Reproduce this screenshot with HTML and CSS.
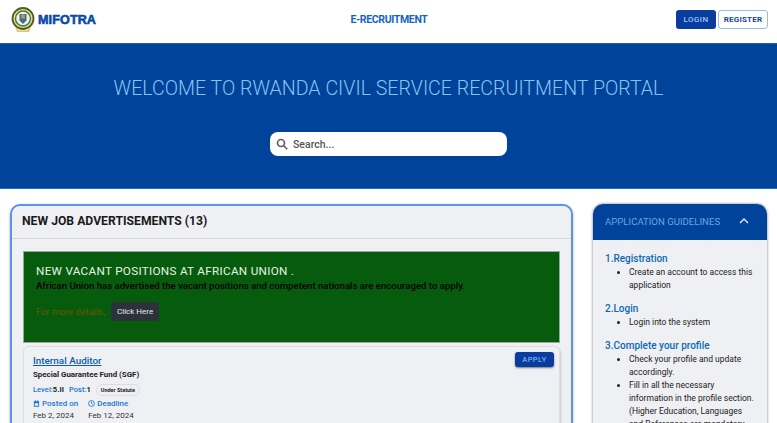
FILE: index.html
```html
<!DOCTYPE html>
<html lang="en">
<head>
<meta charset="UTF-8">
<meta name="viewport" content="width=device-width, initial-scale=1.0"/>
<title>MIFOTRA E-Recruitment</title>
<link rel="stylesheet" href="styles.css">
</head>
<body>
<nav class="navbar">
  <div class="brand">
    <svg class="emblem" width="24" height="26" viewBox="0 0 24 26">
      <circle cx="12" cy="11.5" r="10.5" fill="#e6dc9a" stroke="#4f5f22" stroke-width="1.8"/>
      <circle cx="12" cy="11.5" r="7.5" fill="#f6f3df" stroke="#3c7a3f" stroke-width="1.4"/>
      <path d="M8.5 7h7v6.5L12 17l-3.500-3.500z" fill="#3b6aa8"/>
      <path d="M10.200 7.500h3.600v4h-3.600z" fill="#b9a336"/>
      <path d="M4 20l4 3.500h8l4-3.500-2 5H6z" fill="#d9c95e"/>
    </svg>
    <span class="brand-name">MIFOTRA</span>
  </div>
  <div class="nav-title">E-RECRUITMENT</div>
  <div class="nav-buttons">
    <a class="btn btn-login">LOGIN</a>
    <a class="btn btn-register">REGISTER</a>
  </div>
</nav>

<section class="hero">
  <h1>WELCOME TO RWANDA CIVIL SERVICE RECRUITMENT PORTAL</h1>
  <div class="search">
    <svg width="12" height="12" viewBox="0 0 24 24" fill="none" stroke="#5f6368" stroke-width="3.4">
      <circle cx="10" cy="10" r="7"/>
      <path d="M15 15l7.500 7.500"/>
    </svg>
    <span>Search...</span>
  </div>
</section>

<main class="content">
  <section class="jobs">
    <h2 class="jobs-title">NEW JOB ADVERTISEMENTS (13)</h2>
    <div class="jobs-body">
      <div class="notice">
        <h3>NEW VACANT POSITIONS AT AFRICAN UNION .</h3>
        <p class="notice-text">African Union has advertised the vacant positions and competent nationals are encouraged to apply.</p>
        <p class="notice-more">For more details, <a class="click-here">Click Here</a></p>
      </div>
      <div class="job">
        <a class="apply">APPLY</a>
        <a class="job-name">Internal Auditor</a>
        <div class="employer">Special Guarantee Fund (SGF)</div>
        <div class="job-meta">
          <span class="key">Level:</span><b>5.II</b>
          <span class="key post">Post:</span><b>1</b>
          <span class="chip">Under Statute</span>
        </div>
        <div class="dates">
          <div>
            <div class="key date-label">
              <svg width="7" height="7" viewBox="0 0 24 24" fill="#1976d2"><path d="M3 4h3V1h3v3h6V1h3v3h3v19H3zm3 7v9h12v-9z"/></svg>
              Posted on
            </div>
            <div class="date">Feb 2, 2024</div>
          </div>
          <div>
            <div class="key date-label">
              <svg width="7" height="7" viewBox="0 0 24 24" fill="none" stroke="#1976d2" stroke-width="3"><circle cx="12" cy="12" r="10"/><path d="M12 6v6l4 2"/></svg>
              Deadline
            </div>
            <div class="date">Feb 12, 2024</div>
          </div>
        </div>
      </div>
    </div>
  </section>

  <aside class="guide">
    <div class="guide-head">
      <span>APPLICATION GUIDELINES</span>
      <svg width="10" height="6" viewBox="0 0 10 6" fill="none" stroke="#e3edf7" stroke-width="1.4"><path d="M1 5l4-4 4 4"/></svg>
    </div>
    <div class="guide-body">
      <h4>1.Registration</h4>
      <ul>
        <li>Create an account to access this application</li>
      </ul>
      <h4>2.Login</h4>
      <ul>
        <li>Login into the system</li>
      </ul>
      <h4>3.Complete your profile</h4>
      <ul>
        <li>Check your profile and update accordingly.</li>
        <li>Fill in all the necessary information in the profile section. (Higher Education, Languages and References are mandatory</li>
      </ul>
    </div>
  </aside>
</main>
</body>
</html>
```

FILE: styles.css
```css
html, body {
  height: 423px;
  overflow: hidden;
}
body {
  margin: 0;
  font-family: Roboto, "Liberation Sans", sans-serif;
  background: #fff;
  color: #212121;
  font-size: 10px;
}

/* top bar */
.navbar {
  height: 43px;
  display: grid;
  grid-template-columns: 1fr auto 1fr;
  align-items: center;
  padding: 0 9px 4px 10px;
  box-sizing: border-box;
}
.brand {
  display: flex;
  align-items: center;
  gap: 3px;
}
.emblem {
  margin-left: 1px;
}
.brand-name {
  font-family: "Liberation Sans", sans-serif;
  font-weight: bold;
  font-size: 12.6px;
  letter-spacing: 0.1px;
  color: #0a4aa6;
  -webkit-text-stroke: 0.6px #0a4aa6;
}
.nav-title {
  font-size: 10.5px;
  font-weight: bold;
  letter-spacing: -0.35px;
  color: #1565c0;
}
.nav-buttons {
  display: flex;
  justify-content: flex-end;
  gap: 2px;
}
.btn {
  height: 19px;
  display: flex;
  align-items: center;
  justify-content: center;
  border-radius: 3px;
  font-size: 8px;
  font-weight: 500;
  letter-spacing: 0.4px;
  box-sizing: border-box;
}
.btn-login {
  width: 40px;
  background: #0a3ca0;
  color: #90caf9;
}
.btn-register {
  width: 50px;
  background: #fff;
  border: 1px solid #90bfe8;
  color: #0d47a1;
  font-weight: bold;
  letter-spacing: 0.2px;
}

/* blue banner */
.hero {
  height: 146px;
  background: #01429a;
  border-top: 1px solid #1c62b0;
  border-bottom: 1px solid #1c72c0;
  box-sizing: border-box;
  display: flex;
  flex-direction: column;
  align-items: center;
  padding-top: 32px;
}
.hero h1 {
  margin: 0;
  font-size: 19.6px;
  line-height: 26px;
  font-weight: 300;
  color: #86c5f0;
}
.search {
  width: 237px;
  height: 24px;
  margin-top: 30px;
  background: #fff;
  border-radius: 8px;
  display: flex;
  align-items: center;
  gap: 5px;
  padding-left: 6px;
  box-sizing: border-box;
  font-size: 10.5px;
  font-weight: 500;
  color: #555;
}

/* main columns */
.content {
  display: flex;
  align-items: flex-start;
  gap: 20px;
  padding: 15px 10px 0;
}
.jobs {
  width: 563px;
  flex: none;
  background: #eff0f4;
  border: 2px solid #5a94ea;
  border-radius: 10px;
  box-sizing: border-box;
  box-shadow: 0 1px 3px rgba(0,0,0,0.3);
}
.jobs-title {
  margin: 0;
  height: 32px;
  padding-left: 10px;
  line-height: 31px;
  font-size: 12.2px;
  font-weight: 700;
  color: #1a1a1a;
  border-bottom: 1px solid #d8d9dd;
}
.jobs-body {
  padding: 12px 11px 0;
}
.notice {
  height: 92px;
  background: #065c0c;
  border: 1px solid #9aa79a;
  box-sizing: border-box;
  padding: 12px 12px 0;
}
.notice h3 {
  margin: 0;
  font-size: 11.7px;
  line-height: 15px;
  font-weight: 400;
  letter-spacing: 0.3px;
  color: #e6f2e6;
}
.notice-text {
  margin: 0;
  font-size: 9.6px;
  line-height: 14px;
  font-weight: 500;
  color: #000;
}
.notice-more {
  margin: 9px 0 0;
  display: flex;
  align-items: center;
  gap: 6px;
  font-size: 9.3px;
  color: #6d5400;
}
.click-here {
  height: 19px;
  padding: 0 6px;
  display: flex;
  align-items: center;
  background: #2c323a;
  border-radius: 3px;
  font-size: 8px;
  color: #e8e8e8;
}
.job {
  position: relative;
  margin-top: 3px;
  height: 120px;
  background: #eff0f4;
  border: 1px solid #dcdde1;
  border-radius: 6px;
  padding: 7px 9px 0;
  box-sizing: border-box;
  box-shadow: 1px 1px 2px rgba(0,0,0,0.15);
}
.apply {
  position: absolute;
  top: 5px;
  right: 5px;
  width: 39px;
  height: 15px;
  display: flex;
  align-items: center;
  justify-content: center;
  background: #0a3ca0;
  border-radius: 3px;
  box-shadow: 0 1px 2px rgba(0,0,0,0.5);
  font-size: 7.5px;
  letter-spacing: 0.5px;
  color: #90caf9;
}
.job-name {
  display: block;
  font-size: 9.9px;
  line-height: 13px;
  font-weight: 500;
  color: #0d5cb0;
  text-decoration: underline;
}
.employer {
  margin-top: 2px;
  font-size: 7.9px;
  line-height: 11px;
  font-weight: bold;
  color: #222;
}
.job-meta {
  margin-top: 4px;
  display: flex;
  align-items: center;
  font-size: 7.6px;
  line-height: 12px;
}
.key {
  color: #1976d2;
  font-weight: 500;
}
.post {
  margin-left: 5px;
}
.chip {
  margin-left: 5px;
  padding: 0 4px;
  height: 10px;
  line-height: 10px;
  border: 1px solid #dcdde1;
  border-radius: 7px;
  font-size: 5.5px;
  font-weight: bold;
  color: #222;
}
.dates {
  margin-top: 2px;
  display: flex;
  gap: 10px;
  font-size: 8px;
}
.date-label {
  display: flex;
  align-items: center;
  gap: 2px;
  line-height: 11px;
}
.date {
  margin-top: 1px;
  line-height: 12px;
  color: #333;
}

/* right column */
.guide {
  width: 174px;
  flex: none;
  background: #eff0f4;
  border-radius: 10px 10px 0 0;
  box-shadow: 0 0 3px rgba(0,0,0,0.55);
  overflow: hidden;
}
.guide-head {
  height: 36px;
  background: #01429a;
  display: flex;
  align-items: center;
  justify-content: space-between;
  padding: 0 18px 2px 12px;
  box-sizing: border-box;
  font-size: 9.6px;
  color: #64a8e8;
}
.guide-body {
  padding: 12px 12px 0;
}
.guide-body h4 {
  margin: 0;
  padding-bottom: 1px;
  font-size: 10px;
  line-height: 13px;
  font-weight: 500;
  color: #0d6ab0;
}
.guide-body ul {
  margin: 0 0 10px;
  padding-left: 24px;
  font-size: 8.5px;
  line-height: 13px;
  color: #222;
}
```
